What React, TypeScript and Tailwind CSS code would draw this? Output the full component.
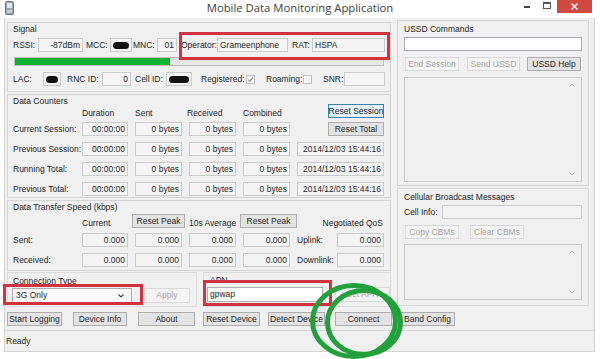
import React from "react";

type P = { className?: string; children?: React.ReactNode };

const COLS = "grid grid-cols-[62px_46px_47px_47px_47px_87px] gap-x-[7px]";

function Lbl({ className = "", children }: P) {
  return <div className={`shrink-0 whitespace-nowrap flex items-center h-[14px] ${className}`}>{children}</div>;
}

function Box({ className = "", left, white, children }: P & { left?: boolean; white?: boolean }) {
  return (
    <div
      className={`shrink-0 h-[14px] flex items-center overflow-hidden whitespace-nowrap border px-[2px] ${
        white ? "bg-white border-[#abadb3]" : "bg-[#f4f4f4] border-[#cbcbcb]"
      } ${left ? "justify-start" : "justify-end"} ${className}`}
    >
      {children}
    </div>
  );
}

function Btn({ className = "", disabled, focus, children }: P & { disabled?: boolean; focus?: boolean }) {
  return (
    <button
      type="button"
      className={`shrink-0 h-[14px] flex items-center justify-center whitespace-nowrap border ${
        disabled
          ? "bg-[#f4f4f4] border-[#d9d9d9] text-[#a6a6a6]"
          : focus
          ? "bg-[#e5f1fb] border-[#3c7fb1]"
          : "bg-[#e3e3e3] border-[#adadad]"
      } ${className}`}
    >
      {children}
    </button>
  );
}

function Check({ checked }: { checked?: boolean }) {
  return (
    <div className="shrink-0 w-[9px] h-[9px] border border-[#c4c4c4] bg-[#f4f4f4] flex items-center justify-center">
      {checked && (
        <svg width="7" height="7" viewBox="0 0 7 7">
          <path d="M1 3.6 L2.8 5.4 L6 1.4" stroke="#9a9a9a" strokeWidth="1.2" fill="none" />
        </svg>
      )}
    </div>
  );
}

function Blot() {
  return <span className="block h-[7px] w-full rounded-full bg-[#111]" />;
}

function ScrollBox({ className = "" }: P) {
  return (
    <div className={`border border-[#c8c8c8] bg-[#f0f0f0] flex justify-end ${className}`}>
      <div className="w-[18px] flex flex-col justify-between items-center py-[5px]">
        <svg width="6" height="4" viewBox="0 0 6 4">
          <path d="M0.5 3.5 L3 1 L5.5 3.5" stroke="#b4b4b4" strokeWidth="1" fill="none" />
        </svg>
        <svg width="6" height="4" viewBox="0 0 6 4">
          <path d="M0.5 0.5 L3 3 L5.5 0.5" stroke="#b4b4b4" strokeWidth="1" fill="none" />
        </svg>
      </div>
    </div>
  );
}

export default function App() {
  const counters = ["Current Session:", "Previous Session:", "Running Total:", "Previous Total:"];

  return (
    <div className="relative w-[600px] h-[359px] bg-white overflow-hidden whitespace-nowrap font-['Liberation_Sans',Arial,sans-serif] text-[8.5px] leading-none text-[#262626]">
      {/* title bar */}
      <div className="grid grid-cols-[1fr_auto_1fr] h-[18px]">
        <div className="pl-[5px] pt-[1px]">
          <svg width="9" height="14" viewBox="0 0 9 14">
            <rect x="0.5" y="0.5" width="8" height="13" rx="1.5" fill="#9aa6b4" stroke="#6d7886" />
            <rect x="2" y="2" width="5" height="5" fill="#dfe8f2" />
            <rect x="2" y="9" width="5" height="3" fill="#c7d0da" />
          </svg>
        </div>
        <div className="font-['Open_Sans',sans-serif] text-[11.3px] leading-[16px] text-[#404040]">
          Mobile Data Monitoring Application
        </div>
        <div className="flex justify-end items-start pr-[8px]">
          <div className="w-[20px] h-[13px] flex items-center justify-center">
            <span className="block w-[6px] h-[2px] bg-[#444] mt-[1px]" />
          </div>
          <div className="w-[20px] h-[13px] flex items-center justify-center">
            <span className="block w-[8px] h-[7px] border border-[#555] border-t-2 -mt-[2px]" />
          </div>
          <div className="w-[35px] h-[13px] bg-[#d2493f] flex items-center justify-center">
            <svg width="7" height="7" viewBox="0 0 7 7">
              <path d="M0.5 0.5 L6.5 6.5 M6.5 0.5 L0.5 6.5" stroke="#fff" strokeWidth="1.4" />
            </svg>
          </div>
        </div>
      </div>

      {/* client area */}
      <div className="ml-[4px] w-[591px] h-[334px] bg-[#f0f0f0] border-x border-b border-[#d4d4d4] pt-[2px] flex flex-col">
        <div className="flex items-start pl-[2px] h-[287px]">
          {/* left column */}
          <div className="w-[384px] mt-[2px] flex flex-col">
            {/* Signal */}
            <div className="h-[70px] border border-[#d5d5d5] pl-[5px] pt-[1px]">
              <div className="h-[11px] flex items-center">Signal</div>
              <div className="flex items-center mt-[3px]">
                <Lbl className="w-[25px]">RSSI:</Lbl>
                <Box className="w-[45px]">-87dBm</Box>
                <Lbl className="ml-[3px] w-[24px]">MCC:</Lbl>
                <Box className="w-[22px]"><Blot /></Box>
                <Lbl className="ml-[1px] w-[24px]">MNC:</Lbl>
                <Box className="w-[20px]">01</Box>
                <Lbl className="ml-[4px] w-[36px]">Operator:</Lbl>
                <Box left className="w-[71px]">Grameenphone</Box>
                <Lbl className="ml-[4px] w-[20px]">RAT:</Lbl>
                <Box left className="w-[73px]">HSPA</Box>
              </div>
              <div className="ml-[1px] mt-[5px] w-[370px] h-[9px] border border-[#bcbcbc] bg-[#e6e6e6]">
                <div className="w-[42%] h-full bg-[#0fb131]" />
              </div>
              <div className="flex items-center mt-[6px]">
                <Lbl className="w-[30px]">LAC:</Lbl>
                <Box className="w-[18px]"><Blot /></Box>
                <Lbl className="ml-[6px] w-[35px]">RNC ID:</Lbl>
                <Box className="w-[29px]">0</Box>
                <Lbl className="ml-[4px] w-[31px]">Cell ID:</Lbl>
                <Box className="w-[26px]"><Blot /></Box>
                <Lbl className="ml-[9px] w-[45px]">Registered:</Lbl>
                <Check checked />
                <Lbl className="ml-[11px] w-[37px]">Roaming:</Lbl>
                <Check />
                <Lbl className="ml-[11px] w-[21px]">SNR:</Lbl>
                <Box className="w-[41px]" />
              </div>
            </div>

            {/* Data Counters */}
            <div className="mt-[2px] h-[104px] border border-[#d5d5d5] pl-[5px] pt-[1px]">
              <div className="h-[10px] flex items-center">Data Counters</div>
              <div className={`${COLS} h-[14px] -mt-[2px] items-end`}>
                <div />
                <div className="pb-[1px]">Duration</div>
                <div className="pb-[1px]">Sent</div>
                <div className="pb-[1px] -ml-[2px]">Received</div>
                <div className="pb-[1px]">Combined</div>
                <Btn focus className="justify-self-end w-[56px]">Reset Session</Btn>
              </div>
              <div className="flex flex-col gap-y-[6px] mt-[4px]">
                {counters.map((c, i) => (
                  <div key={c} className={`${COLS} h-[14px] items-center`}>
                    <Lbl>{c}</Lbl>
                    <Box>00:00:00</Box>
                    <Box>0 bytes</Box>
                    <Box>0 bytes</Box>
                    <Box>0 bytes</Box>
                    {i === 0 ? (
                      <Btn className="justify-self-end w-[56px]">Reset Total</Btn>
                    ) : (
                      <Box className="justify-center">2014/12/03 15:44:16</Box>
                    )}
                  </div>
                ))}
              </div>
            </div>

            {/* Data Transfer Speed */}
            <div className="mt-[2px] h-[71px] border border-[#d5d5d5] pl-[5px] pt-[1px]">
              <div className="h-[10px] flex items-center">Data Transfer Speed (kbps)</div>
              <div className={`${COLS} h-[13px] mt-[2px] items-end`}>
                <div />
                <div className="pb-[1px]">Current</div>
                <Btn className="-mx-[3px] h-[13px]">Reset Peak</Btn>
                <div className="pb-[1px]">10s Average</div>
                <Btn className="-ml-[3px] w-[57px] h-[13px]">Reset Peak</Btn>
                <div className="pb-[1px] text-right pr-[1px]">Negotiated QoS</div>
              </div>
              {[
                ["Sent:", "Uplink:"],
                ["Received:", "Downlink:"],
              ].map(([a, b]) => (
                <div key={a} className={`${COLS} h-[14px] mt-[6px] items-center`}>
                  <Lbl>{a}</Lbl>
                  <Box>0.000</Box>
                  <Box>0.000</Box>
                  <Box>0.000</Box>
                  <Box>0.000</Box>
                  <div className="flex items-center justify-between">
                    <span>{b}</span>
                    <Box className="w-[47px]">0.000</Box>
                  </div>
                </div>
              ))}
            </div>

            {/* Connection Type + APN */}
            <div className="mt-[1px] h-[35px] flex">
              <div className="w-[190px] border border-[#dcdcdc] pl-[5px] pt-[3px]">
                <div className="h-[10px] flex items-center">Connection Type</div>
                <div className="flex items-center mt-[2px]">
                  <div className="-ml-[1px] w-[120px] h-[15px] border border-[#acacac] bg-[#f9f9f9] flex items-center justify-between pl-[3px] pr-[7px]">
                    <span>3G Only</span>
                    <svg width="6" height="4" viewBox="0 0 6 4">
                      <path d="M0.5 0.5 L3 3 L5.5 0.5" stroke="#444" strokeWidth="1.1" fill="none" />
                    </svg>
                  </div>
                  <Btn disabled className="ml-[12px] w-[46px] h-[15px]">Apply</Btn>
                </div>
              </div>
              <div className="ml-[6px] flex-1 border border-[#dcdcdc] pl-[6px] pt-[2px]">
                <div className="h-[10px] flex items-center">APN</div>
                <div className="flex items-center mt-[2px]">
                  <Box white left className="-ml-[3px] w-[116px] h-[15px]">gpwap</Box>
                  <Btn disabled className="ml-[12px] w-[55px] h-[15px]">Set APN</Btn>
                </div>
              </div>
            </div>
          </div>

          {/* right column */}
          <div className="ml-[6px] w-[192px] flex flex-col">
            <div className="h-[166px] border border-[#d5d5d5] pl-[6px] pt-[3px]">
              <div className="h-[10px] flex items-center">USSD Commands</div>
              <Box white className="mt-[3px] w-[178px]" />
              <div className="flex items-center mt-[6px]">
                <Btn disabled className="ml-[1px] w-[54px]">End Session</Btn>
                <Btn disabled className="ml-[8px] w-[53px]">Send USSD</Btn>
                <Btn className="ml-[7px] w-[54px]">USSD Help</Btn>
              </div>
              <ScrollBox className="mt-[6px] w-[178px] h-[105px]" />
            </div>
            <div className="mt-[2px] h-[118px] border border-[#d5d5d5] pl-[6px] pt-[3px]">
              <div className="h-[10px] flex items-center">Cellular Broadcast Messages</div>
              <div className="flex items-center mt-[3px]">
                <Lbl className="w-[38px]">Cell Info:</Lbl>
                <Box className="w-[140px]" />
              </div>
              <div className="flex items-center mt-[6px]">
                <Btn disabled className="ml-[1px] w-[54px]">Copy CBMs</Btn>
                <Btn disabled className="ml-[11px] w-[54px]">Clear CBMs</Btn>
              </div>
              <ScrollBox className="mt-[5px] w-[178px] h-[56px]" />
            </div>
          </div>
        </div>

        {/* bottom buttons */}
        <div className="flex items-center pl-[2px] mt-[5px] h-[14px]">
          <Btn className="w-[55px]">Start Logging</Btn>
          <Btn className="ml-[11px] w-[54px]">Device Info</Btn>
          <Btn className="ml-[11px] w-[57px]">About</Btn>
          <Btn className="ml-[8px] w-[57px]">Reset Device</Btn>
          <Btn className="ml-[8px] w-[57px]">Detect Device</Btn>
          <Btn className="ml-[10px] w-[57px]">Connect</Btn>
          <Btn className="ml-[8px] w-[55px]">Band Config</Btn>
        </div>

        {/* status bar */}
        <div className="mt-[4px] h-[21px] border-t border-[#d2d2d2] flex items-center pl-[1px]">Ready</div>
      </div>

      {/* annotations */}
      <div className="absolute left-[179px] top-[32px] w-[211px] h-[28px] border-[3px] border-[#d0323f]" />
      <div className="absolute left-[3px] top-[284px] w-[140px] h-[21px] border-[3px] border-[#d0323f]" />
      <div className="absolute left-[203px] top-[280px] w-[129px] h-[26px] border-[3px] border-[#d0323f]" />
      <svg className="absolute left-0 top-0 pointer-events-none" width="600" height="359" viewBox="0 0 600 359">
        <ellipse cx="354" cy="321" rx="41.5" ry="35.5" fill="none" stroke="#21a03c" strokeWidth="5" />
        <ellipse cx="364" cy="322.5" rx="36.5" ry="32" fill="none" stroke="#21a03c" strokeWidth="5" />
      </svg>
    </div>
  );
}
